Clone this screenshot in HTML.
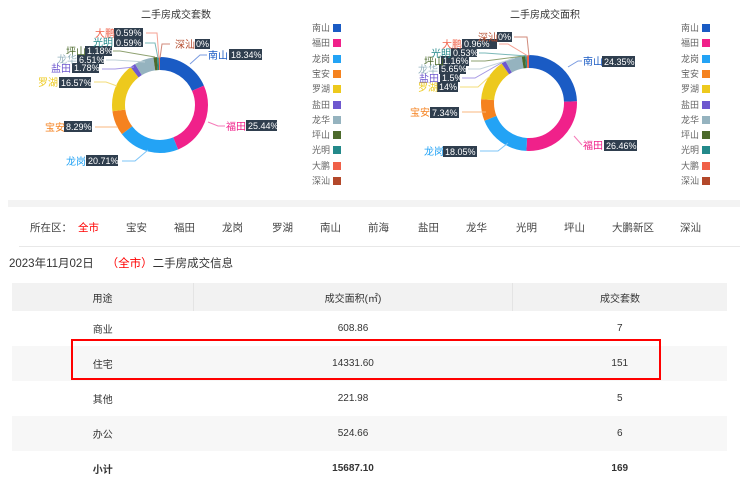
<!DOCTYPE html>
<html><head><meta charset="utf-8"><style>
body{margin:0;width:740px;height:476px;overflow:hidden;background:#fff;font-family:"Liberation Sans","Noto Sans CJK SC",sans-serif;color:#333;position:relative}
.abs{position:absolute}
.nav{position:absolute;top:220px;font-size:10.5px;color:#444}
table{position:absolute;left:12px;top:283px;width:715px;border-collapse:collapse;font-size:10px;color:#333}
td{text-align:center;height:35px;padding:0}
tr.h td{height:28px;background:#f2f2f2;border-right:1px solid #e4e4e4}
tr.h td:last-child{border-right:none}
tr.g td{background:#f7f7f7}
tr.b td{font-weight:bold}
</style></head><body>
<svg class="abs" style="left:0;top:0" width="740" height="200" font-family="Liberation Sans,Noto Sans CJK SC,sans-serif">
<text x="176" y="18" font-size="10" fill="#333" text-anchor="middle">二手房成交套数</text>
<text x="545" y="18" font-size="10" fill="#333" text-anchor="middle">二手房成交面积</text>
<g transform="rotate(-90 160 105)" fill="none" stroke-width="13">
<circle cx="160" cy="105" r="41.5" stroke="#1a5bc4" stroke-dasharray="47.82 300" stroke-dashoffset="0"/>
<circle cx="160" cy="105" r="41.5" stroke="#f0218a" stroke-dasharray="66.34 300" stroke-dashoffset="-47.82"/>
<circle cx="160" cy="105" r="41.5" stroke="#23a3f5" stroke-dasharray="54 300" stroke-dashoffset="-114.16"/>
<circle cx="160" cy="105" r="41.5" stroke="#f5821f" stroke-dasharray="21.62 300" stroke-dashoffset="-168.16"/>
<circle cx="160" cy="105" r="41.5" stroke="#edc91d" stroke-dasharray="43.21 300" stroke-dashoffset="-189.78"/>
<circle cx="160" cy="105" r="41.5" stroke="#6e58cf" stroke-dasharray="4.64 300" stroke-dashoffset="-232.99"/>
<circle cx="160" cy="105" r="41.5" stroke="#95b3bf" stroke-dasharray="16.97 300" stroke-dashoffset="-237.63"/>
<circle cx="160" cy="105" r="41.5" stroke="#4c6a2c" stroke-dasharray="3.08 300" stroke-dashoffset="-254.6"/>
<circle cx="160" cy="105" r="41.5" stroke="#23898a" stroke-dasharray="1.54 300" stroke-dashoffset="-257.68"/>
<circle cx="160" cy="105" r="41.5" stroke="#f06048" stroke-dasharray="1.54 300" stroke-dashoffset="-259.22"/>
</g>
<g transform="rotate(-90 529 103)" fill="none" stroke-width="13">
<circle cx="529" cy="103" r="41.5" stroke="#1a5bc4" stroke-dasharray="63.49 300" stroke-dashoffset="0"/>
<circle cx="529" cy="103" r="41.5" stroke="#f0218a" stroke-dasharray="69 300" stroke-dashoffset="-63.49"/>
<circle cx="529" cy="103" r="41.5" stroke="#23a3f5" stroke-dasharray="47.07 300" stroke-dashoffset="-132.49"/>
<circle cx="529" cy="103" r="41.5" stroke="#f5821f" stroke-dasharray="19.14 300" stroke-dashoffset="-179.56"/>
<circle cx="529" cy="103" r="41.5" stroke="#edc91d" stroke-dasharray="36.51 300" stroke-dashoffset="-198.7"/>
<circle cx="529" cy="103" r="41.5" stroke="#6e58cf" stroke-dasharray="3.91 300" stroke-dashoffset="-235.21"/>
<circle cx="529" cy="103" r="41.5" stroke="#95b3bf" stroke-dasharray="14.73 300" stroke-dashoffset="-239.12"/>
<circle cx="529" cy="103" r="41.5" stroke="#4c6a2c" stroke-dasharray="3.02 300" stroke-dashoffset="-253.85"/>
<circle cx="529" cy="103" r="41.5" stroke="#23898a" stroke-dasharray="1.38 300" stroke-dashoffset="-256.87"/>
<circle cx="529" cy="103" r="41.5" stroke="#f06048" stroke-dasharray="2.5 300" stroke-dashoffset="-258.25"/>
</g>
<g fill="none" stroke-width="1">
<polyline points="190,64 200,55 207,55" stroke="#7a9be0"/>
<polyline points="208,122 218,126 225,126" stroke="#f57ab8"/>
<polyline points="148,150 135,161 122,161" stroke="#7cc4f7"/>
<polyline points="118,127 100,127 95,127" stroke="#f8b77f"/>
<polyline points="117,86 106,82 94,82" stroke="#f3dc7a"/>
<polyline points="134,67 115,69 102,69" stroke="#a799e4"/>
<polyline points="145,62 115,60 106,60" stroke="#c0d2d9"/>
<polyline points="155,57 120,51 113,51" stroke="#8ea170"/>
<polyline points="158,58 155,43 145,43" stroke="#7ab8b8"/>
<polyline points="159,58 157,33 146,33" stroke="#f5a193"/>
<polyline points="160,58 162,44 170,44" stroke="#d0897a"/>
<polyline points="568,67 578,61 582,61" stroke="#7a9be0"/>
<polyline points="574,136 582,145 582,145" stroke="#f57ab8"/>
<polyline points="508,143 498,151 480,151" stroke="#7cc4f7"/>
<polyline points="486,112 470,112 462,112" stroke="#f8b77f"/>
<polyline points="490,76 478,87 460,87" stroke="#f3dc7a"/>
<polyline points="503,62 475,78 462,78" stroke="#a799e4"/>
<polyline points="515,58 480,69 468,69" stroke="#c0d2d9"/>
<polyline points="524,56 485,61 471,61" stroke="#8ea170"/>
<polyline points="527,56 485,53 479,53" stroke="#7ab8b8"/>
<polyline points="528,56 508,44 499,44" stroke="#f5a193"/>
<polyline points="529,56 527,37 514,37" stroke="#d0897a"/>
</g>
<g font-size="9" fill="#fff">
<rect x="114" y="28" width="29" height="10" fill="#2f3e4e"/><text x="116" y="36">0.59%</text>
<rect x="114" y="38" width="29" height="9" fill="#2f3e4e"/><text x="116" y="46">0.59%</text>
<rect x="195" y="39" width="15" height="10" fill="#2f3e4e"/><text x="196" y="47">0%</text>
<rect x="85" y="46" width="27" height="10" fill="#2f3e4e"/><text x="87" y="54">1.18%</text>
<rect x="229" y="49" width="33" height="11" fill="#2f3e4e"/><text x="231" y="58">18.34%</text>
<rect x="77" y="55" width="27" height="9" fill="#2f3e4e"/><text x="79" y="63">6.51%</text>
<rect x="72" y="63" width="27" height="10" fill="#2f3e4e"/><text x="74" y="71">1.78%</text>
<rect x="59" y="77" width="32" height="11" fill="#2f3e4e"/><text x="61" y="86">16.57%</text>
<rect x="64" y="121" width="28" height="11" fill="#2f3e4e"/><text x="66" y="130">8.29%</text>
<rect x="246" y="120" width="31" height="11" fill="#2f3e4e"/><text x="248" y="129">25.44%</text>
<rect x="86" y="155" width="32" height="11" fill="#2f3e4e"/><text x="88" y="164">20.71%</text>
<rect x="497" y="32" width="15" height="10" fill="#2f3e4e"/><text x="498" y="40">0%</text>
<rect x="462" y="39" width="35" height="10" fill="#2f3e4e"/><text x="464" y="47">0.96%</text>
<rect x="451" y="48" width="26" height="9" fill="#2f3e4e"/><text x="453" y="56">0.53%</text>
<rect x="441" y="56" width="28" height="10" fill="#2f3e4e"/><text x="443" y="64">1.16%</text>
<rect x="602" y="56" width="33" height="11" fill="#2f3e4e"/><text x="604" y="65">24.35%</text>
<rect x="439" y="64" width="27" height="10" fill="#2f3e4e"/><text x="441" y="72">5.65%</text>
<rect x="440" y="73" width="20" height="9" fill="#2f3e4e"/><text x="442" y="81">1.5%</text>
<rect x="437" y="82" width="21" height="10" fill="#2f3e4e"/><text x="439" y="90">14%</text>
<rect x="430" y="107" width="29" height="11" fill="#2f3e4e"/><text x="432" y="116">7.34%</text>
<rect x="604" y="140" width="33" height="11" fill="#2f3e4e"/><text x="606" y="149">26.46%</text>
<rect x="443" y="146" width="34" height="11" fill="#2f3e4e"/><text x="445" y="155">18.05%</text>
</g>
<g font-size="10">
<text x="95" y="37" fill="#f06048">大鹏</text><text x="93" y="46" fill="#23898a">光明</text>
<text x="175" y="48" fill="#b3482a">深汕</text><text x="66" y="55" fill="#4c6a2c">坪山</text>
<text x="208" y="59" fill="#1a5bc4">南山</text><text x="57" y="63" fill="#95b3bf">龙华</text>
<text x="51" y="72" fill="#6e58cf">盐田</text><text x="38" y="86" fill="#edc91d">罗湖</text>
<text x="45" y="131" fill="#f5821f">宝安</text><text x="226" y="130" fill="#f0218a">福田</text>
<text x="66" y="165" fill="#23a3f5">龙岗</text>
<text x="478" y="41" fill="#b3482a">深汕</text><text x="442" y="48" fill="#f06048">大鹏</text>
<text x="431" y="57" fill="#23898a">光明</text><text x="424" y="65" fill="#4c6a2c">坪山</text>
<text x="583" y="65" fill="#1a5bc4">南山</text><text x="418" y="73" fill="#95b3bf">龙华</text>
<text x="419" y="82" fill="#6e58cf">盐田</text><text x="418" y="91" fill="#edc91d">罗湖</text>
<text x="410" y="116" fill="#f5821f">宝安</text><text x="583" y="149" fill="#f0218a">福田</text>
<text x="424" y="155" fill="#23a3f5">龙岗</text>
</g>
<g font-size="9" fill="#666">
<text x="312" y="31">南山</text><text x="312" y="46">福田</text><text x="312" y="62">龙岗</text><text x="312" y="77">宝安</text><text x="312" y="92">罗湖</text><text x="312" y="108">盐田</text><text x="312" y="123">龙华</text><text x="312" y="138">坪山</text><text x="312" y="153">光明</text><text x="312" y="169">大鹏</text><text x="312" y="184">深汕</text>
<text x="681" y="31">南山</text><text x="681" y="46">福田</text><text x="681" y="62">龙岗</text><text x="681" y="77">宝安</text><text x="681" y="92">罗湖</text><text x="681" y="108">盐田</text><text x="681" y="123">龙华</text><text x="681" y="138">坪山</text><text x="681" y="153">光明</text><text x="681" y="169">大鹏</text><text x="681" y="184">深汕</text>
</g>
<g>
<rect x="333" y="24" width="8" height="8" fill="#1a5bc4"/><rect x="333" y="39" width="8" height="8" fill="#f0218a"/><rect x="333" y="55" width="8" height="8" fill="#23a3f5"/><rect x="333" y="70" width="8" height="8" fill="#f5821f"/><rect x="333" y="85" width="8" height="8" fill="#edc91d"/><rect x="333" y="101" width="8" height="8" fill="#6e58cf"/><rect x="333" y="116" width="8" height="8" fill="#95b3bf"/><rect x="333" y="131" width="8" height="8" fill="#4c6a2c"/><rect x="333" y="146" width="8" height="8" fill="#23898a"/><rect x="333" y="162" width="8" height="8" fill="#f06048"/><rect x="333" y="177" width="8" height="8" fill="#b3482a"/>
<rect x="702" y="24" width="8" height="8" fill="#1a5bc4"/><rect x="702" y="39" width="8" height="8" fill="#f0218a"/><rect x="702" y="55" width="8" height="8" fill="#23a3f5"/><rect x="702" y="70" width="8" height="8" fill="#f5821f"/><rect x="702" y="85" width="8" height="8" fill="#edc91d"/><rect x="702" y="101" width="8" height="8" fill="#6e58cf"/><rect x="702" y="116" width="8" height="8" fill="#95b3bf"/><rect x="702" y="131" width="8" height="8" fill="#4c6a2c"/><rect x="702" y="146" width="8" height="8" fill="#23898a"/><rect x="702" y="162" width="8" height="8" fill="#f06048"/><rect x="702" y="177" width="8" height="8" fill="#b3482a"/>
</g>
</svg>
<div class="abs" style="left:8px;top:200px;width:732px;height:7px;background:#f3f3f3"></div>
<div class="nav" style="left:30px">所在区：</div>
<div class="nav" style="left:78px;color:#f00">全市</div>
<div class="nav" style="left:126px">宝安</div>
<div class="nav" style="left:174px">福田</div>
<div class="nav" style="left:222px">龙岗</div>
<div class="nav" style="left:272px">罗湖</div>
<div class="nav" style="left:320px">南山</div>
<div class="nav" style="left:368px">前海</div>
<div class="nav" style="left:418px">盐田</div>
<div class="nav" style="left:466px">龙华</div>
<div class="nav" style="left:516px">光明</div>
<div class="nav" style="left:564px">坪山</div>
<div class="nav" style="left:612px">大鹏新区</div>
<div class="nav" style="left:680px">深汕</div>
<div class="abs" style="left:19px;top:246px;width:721px;height:1px;background:#e8e8e8"></div>
<div class="abs" style="left:9px;top:255px;font-size:11.5px;color:#333">2023年11月02日 &nbsp; &nbsp;<span style="color:#f00">（全市）</span>二手房成交信息</div>
<table>
<tr class="h"><td style="width:181px">用途</td><td style="width:318px">成交面积(㎡)</td><td>成交套数</td></tr>
<tr><td>商业</td><td>608.86</td><td>7</td></tr>
<tr class="g"><td>住宅</td><td>14331.60</td><td>151</td></tr>
<tr><td>其他</td><td>221.98</td><td>5</td></tr>
<tr class="g"><td>办公</td><td>524.66</td><td>6</td></tr>
<tr class="b"><td>小计</td><td>15687.10</td><td>169</td></tr>
</table>
<div class="abs" style="left:71px;top:339px;width:586px;height:37px;border:2px solid #f00"></div>
</body></html>
